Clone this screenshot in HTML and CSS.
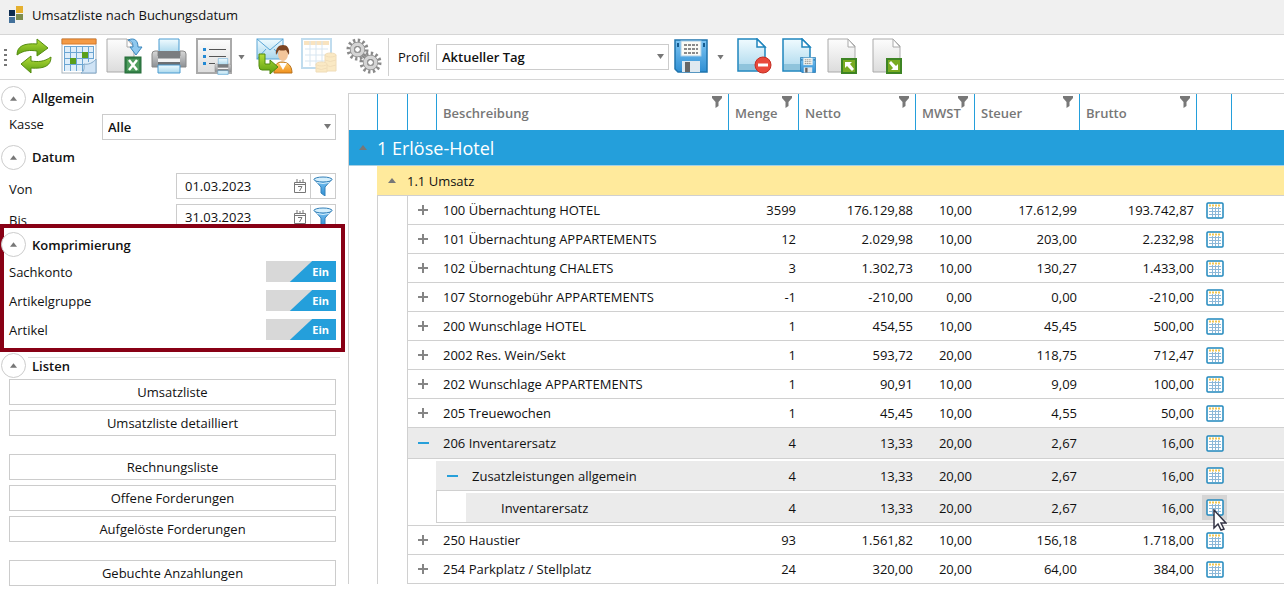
FILE: index.html
```html
<!DOCTYPE html>
<html lang="de">
<head>
<meta charset="utf-8">
<title>Umsatzliste nach Buchungsdatum</title>
<link rel="stylesheet" href="styles.css">
</head>
<body>
<svg class="defs" aria-hidden="true">
  <defs>
    <linearGradient id="gGreen" x1="0" y1="0" x2="0" y2="1"><stop offset="0" stop-color="#b5dd3a"/><stop offset="1" stop-color="#5a9e10"/></linearGradient>
    <linearGradient id="gPage" x1="0" y1="0" x2="0" y2="1"><stop offset="0" stop-color="#fdfdfd"/><stop offset="1" stop-color="#dcdcdc"/></linearGradient>
    <linearGradient id="gSky" x1="0" y1="0" x2="0" y2="1"><stop offset="0" stop-color="#f0fbff"/><stop offset="1" stop-color="#a9d7ec"/></linearGradient>
    <linearGradient id="gBlue" x1="0" y1="0" x2="0" y2="1"><stop offset="0" stop-color="#7cc4f3"/><stop offset="1" stop-color="#2f8fd3"/></linearGradient>
    <linearGradient id="gSteel" x1="0" y1="0" x2="0" y2="1"><stop offset="0" stop-color="#d8d8d8"/><stop offset="1" stop-color="#8d9094"/></linearGradient>
    <linearGradient id="gOrange" x1="0" y1="0" x2="0" y2="1"><stop offset="0" stop-color="#ffd070"/><stop offset="1" stop-color="#f08f1a"/></linearGradient>
    <symbol id="i-grid" viewBox="0 0 18 17">
      <rect x="1" y="1" width="16" height="15" rx="1" fill="#fff" stroke="#2188bd" stroke-width="1.500"/>
      <path d="M3 3.500h12" stroke="#f3c64f" stroke-width="2" stroke-dasharray="2 1"/>
      <path d="M3 6.500h12M3 9.500h12M3 12.500h12M6.500 5v10M9.500 5v10M12.500 5v10" stroke="#8db8d8" fill="none"/>
    </symbol>
    <symbol id="i-funnel" viewBox="0 0 10 12"><path d="M0 0h10v2L6.500 6v4L3.500 12V6L0 2z" fill="#787878"/></symbol>
    <symbol id="i-plus" viewBox="0 0 12 12"><path d="M6 1v10M1 6h10" stroke="#858585" stroke-width="2"/></symbol>
    <symbol id="i-minus" viewBox="0 0 12 12"><path d="M1 6h11" stroke="#27a0da" stroke-width="2"/></symbol>
    <symbol id="i-up" viewBox="0 0 8 5"><path d="M4 0l4 5H0z" fill="#777"/></symbol>
    <symbol id="i-datefilter" viewBox="0 0 20 20">
      <path d="M1 3l7 8v6l4 3v-9l7-8z" fill="url(#gBlue)" stroke="#3480b8"/>
      <ellipse cx="10" cy="3.500" rx="9" ry="2.500" fill="#d5effc" stroke="#3480b8"/><path d="M4 6.500q6 2 12 0" stroke="#d5effc" fill="none"/>
    </symbol>
    <symbol id="i-day" viewBox="0 0 12 14">
      <path d="M.5 3.500h11v10H.5zM.5 5.500h11" fill="none" stroke="#777"/><path d="M3 0v4M6 1v3M9 0v4" stroke="#777"/>
      <path d="M4 7.500h4L5.500 12" fill="none" stroke="#777"/>
    </symbol>
    <symbol id="i-disk" viewBox="0 0 34 34">
      <path d="M1 1h32v32H4l-3-3z" fill="url(#gBlue)" stroke="#1f74ad" stroke-width="1.500"/>
      <rect x="7" y="2" width="20" height="15" fill="#fbfbf5" stroke="#a9cfe8"/>
      <path d="M10 6h14M10 10h14M10 14h14" stroke="#666" stroke-width="1.500" stroke-dasharray="3 1"/>
      <rect x="8" y="22" width="18" height="11" fill="#dfe9f0"/><rect x="11" y="23" width="5" height="10" fill="#666"/>
      <path d="M3 4h2v4H3zM29 4h2v4h-2z" fill="#155c90"/>
    </symbol>
    <symbol id="i-printer" viewBox="0 0 36 36">
      <path d="M8 1h20v14H8z" fill="url(#gSky)" stroke="#4b9bd0"/>
      <path d="M1 16q0-3 3-3h3v5h22v-5h3q3 0 3 3v13H1z" fill="url(#gSteel)" stroke="#888"/>
      <path d="M7 13h22v7H7z" fill="#7a7d80"/><path d="M7 21h22v3H7z" fill="#f3f3f3"/><path d="M7 24h22v3H7z" fill="#6d7073"/>
      <path d="M7 27h22v8H7z" fill="url(#gSky)" stroke="#4b9bd0"/>
    </symbol>
    <symbol id="i-sheet" viewBox="0 0 36 36"><path d="M1 1h20l7 7v26H1z" fill="url(#gPage)" stroke="#aaa"/><path d="M21 1v8h7z" fill="#fff" stroke="#aaa"/></symbol>
    <symbol id="i-bluesheet" viewBox="0 0 36 36"><path d="M2 1h19l8 8v24H2z" fill="url(#gSky)" stroke="#1f85bd" stroke-width="1.500"/><path d="M3 26h25v6H3z" fill="#8fc4dc"/><path d="M21 1v8h8z" fill="#fff" stroke="#1f85bd" stroke-width="1.500"/></symbol>
    <symbol id="i-gear" viewBox="0 0 24 24">
      <circle cx="12" cy="12" r="9.500" fill="none" stroke="#8a8a8a" stroke-width="4" stroke-dasharray="2.400 2.574"/>
      <circle cx="12" cy="12" r="5.500" fill="none" stroke="#8a8a8a" stroke-width="5"/>
      <circle cx="12" cy="12" r="5.500" fill="none" stroke="#d4d4d4" stroke-width="3.500"/>
      <circle cx="12" cy="12" r="3" fill="#fff" stroke="#777"/>
    </symbol>
  </defs>
</svg>

<header class="titlebar">
  <svg class="logo" viewBox="0 0 14 18" width="16" height="18" aria-hidden="true"><path d="M0 4h6v6H0z" fill="#0d2c50"/><path d="M7 0h7v7H7z" fill="#e5b02f"/><path d="M0 11h6v6H0z" fill="#42709a"/><path d="M7 8h7v6H7z" fill="#7c8c4c"/></svg>
  <h1 class="title">Umsatzliste nach Buchungsdatum</h1>
</header>

<nav class="toolbar" aria-label="Werkzeuge">
  <span class="grip"></span>
  <button class="tool" type="button" aria-label="Aktualisieren"><svg viewBox="0 0 36 36">
    <path d="M1 17C1 8 8 5 21 6V1l11 9-11 8v-5C14 12 8 12 1 17z" fill="url(#gGreen)" stroke="#548c10"/>
    <path d="M35 19c0 9-7 12-20 11v5L5 26l10-8v5c7 1 13 1 20-4z" fill="url(#gGreen)" stroke="#548c10"/></svg></button>
  <button class="tool" type="button" aria-label="Kalender"><svg viewBox="0 0 36 36">
    <rect x="1" y="1" width="34" height="34" fill="#fff" stroke="#a9b4bc"/><path d="M1 1h34v5H1z" fill="#f39a45" stroke="#d87a28"/>
    <rect x="3" y="8" width="30" height="25" fill="#dfeefa"/>
    <path d="M3 8.500h30M3 14.500h30M3 20.500h30M3 26.500h22M3.500 8v25M9.500 8v25M15.500 8v25M21.500 8v25M27.500 8v16M32.500 8v13" stroke="#6ba5d2" fill="none"/>
    <path d="M21 14h6v6h-6zM9 20h6v6H9z" fill="#5a9f1b"/><path d="M20 35c4-2 3-7 3-9 4 1 9-1 12-5v14z" fill="#cfe3f5" stroke="#82a9c9"/></svg></button>
  <button class="tool" type="button" aria-label="Excel-Export"><svg viewBox="0 0 36 36"><use href="#i-sheet" width="36" height="36"/>
    <path d="M22 2c7-3 10 1 10 7h4l-6 8-6-8h3c0-4-1-6-5-7z" fill="#8fc8ee" stroke="#3a86bd"/>
    <rect x="19" y="19" width="16" height="16" fill="#348148" stroke="#246b38"/><rect x="21" y="21" width="12" height="12" fill="#4f9d5e"/><path d="M23 22l8 10M31 22l-8 10" stroke="#fff" stroke-width="2.500"/></svg></button>
  <button class="tool" type="button" aria-label="Drucken"><svg viewBox="0 0 36 36"><use href="#i-printer" width="36" height="36"/></svg></button>
  <button class="tool" type="button" aria-label="Liste drucken"><svg viewBox="0 0 36 36">
    <rect x="1" y="1" width="34" height="34" fill="url(#gPage)" stroke="#aaa" stroke-width="2"/>
    <path d="M7 10h3v3H7zM7 17h3v3H7zM7 24h3v3H7z" fill="#2389d3"/><path d="M13 11.500h17M13 18.500h17M13 25.500h6" stroke="#555"/>
    <use href="#i-printer" x="18" y="20" width="18" height="17"/></svg></button>
  <button class="drop" type="button" aria-label="Weitere Druckoptionen"></button>
  <button class="tool" type="button" aria-label="E-Mail senden"><svg viewBox="0 0 36 36">
    <rect x="1" y="1" width="26" height="20" fill="url(#gSky)" stroke="#5aa6d6"/><path d="M1 1l13 11L27 1M1 21l9-10M27 21l-9-10" fill="none" stroke="#5aa6d6"/>
    <path d="M18 35c0-8 3-11 8-11s10 3 10 11z" fill="url(#gOrange)" stroke="#b8711c"/><path d="M23 25l4 7 4-7z" fill="#fff"/>
    <ellipse cx="27" cy="16" rx="5" ry="7" fill="#f3c59a"/><path d="M20 17c-1-7 3-10 7-10s7 3 6 10l-3-5q-4 1-7 0z" fill="#7b4422"/>
    <path d="M3 16h6v10h5v-4l8 7-8 7v-4H6q-3 0-3-4z" fill="url(#gGreen)" stroke="#4f8a0f"/></svg></button>
  <button class="tool is-off" type="button" aria-label="Tabelle" disabled><svg viewBox="0 0 36 36">
    <rect x="1" y="1" width="29" height="29" fill="#fff" stroke="#4d9dd0" stroke-width="2"/><path d="M3 5h25" stroke="#eeb24a" stroke-width="4"/><path d="M4 11h23M4 17h23M4 23h23M9 3v25M15 3v25M21 3v25" stroke="#8fb8d8"/>
    <g fill="#f3c35a" stroke="#d79e36"><path d="M24 17h11v16H24z"/><ellipse cx="29.500" cy="17" rx="5.500" ry="2"/><path d="M24 22q5 3 11 0M24 27q5 3 11 0"/><path d="M15 26h11v8H15z"/><ellipse cx="20.500" cy="26" rx="5.500" ry="2"/><path d="M15 30q5 3 11 0"/></g></svg></button>
  <button class="tool" type="button" aria-label="Einstellungen"><svg viewBox="0 0 36 36"><use href="#i-gear" width="23" height="23"/><use href="#i-gear" x="13" y="13" width="23" height="23"/></svg></button>
  <span class="divider"></span>
  <label class="profil-label" for="profil">Profil</label>
  <span class="select-wrap profil"><select id="profil" class="select"><option>Aktueller Tag</option></select></span>
  <button class="tool" type="button" aria-label="Profil speichern"><svg viewBox="0 0 36 36"><use href="#i-disk" y="1" width="34" height="34"/></svg></button>
  <button class="drop drop-wide" type="button" aria-label="Weitere Speicheroptionen"></button>
  <button class="tool" type="button" aria-label="Profil löschen"><svg viewBox="0 0 36 36"><use href="#i-bluesheet" width="36" height="36"/><circle cx="27" cy="27" r="8" fill="#e9493b" stroke="#c32f24"/><path d="M22 27h10" stroke="#fff" stroke-width="3"/></svg></button>
  <button class="tool" type="button" aria-label="Profil speichern unter"><svg viewBox="0 0 36 36"><use href="#i-bluesheet" width="36" height="36"/><use href="#i-disk" x="19" y="19" width="16" height="16"/></svg></button>
  <button class="tool" type="button" aria-label="Profil importieren"><svg viewBox="0 0 36 36"><use href="#i-sheet" x="1" width="36" height="36"/><rect x="16" y="21" width="14" height="14" fill="#78ab22" stroke="#3d8424" stroke-width="2"/><path d="M19 24h7l-2 2 4 5-2 2-5-5-2 2z" fill="#fff"/></svg></button>
  <button class="tool" type="button" aria-label="Profil exportieren"><svg viewBox="0 0 36 36"><use href="#i-sheet" x="1" width="36" height="36"/><rect x="16" y="21" width="14" height="14" fill="#78ab22" stroke="#3d8424" stroke-width="2"/><path d="M27 32h-7l2-2-4-5 2-2 5 5 2-2z" fill="#fff"/></svg></button>
</nav>

<div class="body">
  <aside class="sidebar">
    <section class="group">
      <h2 class="group-head"><button class="fold" type="button" aria-label="Allgemein einklappen"><svg width="7" height="5"><use href="#i-up"/></svg></button>Allgemein</h2>
      <div class="field"><label for="kasse">Kasse</label><span class="select-wrap kasse"><select id="kasse" class="select"><option>Alle</option></select></span></div>
    </section>
    <section class="group">
      <h2 class="group-head"><button class="fold" type="button" aria-label="Datum einklappen"><svg width="7" height="5"><use href="#i-up"/></svg></button>Datum</h2>
      <div class="field date-field"><label for="von">Von</label><span class="date"><input id="von" type="text" value="01.03.2023"><button class="day" type="button" aria-label="Kalender Von"><svg width="12" height="14"><use href="#i-day"/></svg></button><button class="date-filter" type="button" aria-label="Filter Von"><svg width="20" height="20"><use href="#i-datefilter"/></svg></button></span></div>
      <div class="field date-field"><label for="bis">Bis</label><span class="date"><input id="bis" type="text" value="31.03.2023"><button class="day" type="button" aria-label="Kalender Bis"><svg width="12" height="14"><use href="#i-day"/></svg></button><button class="date-filter" type="button" aria-label="Filter Bis"><svg width="20" height="20"><use href="#i-datefilter"/></svg></button></span></div>
    </section>
    <section class="group marked">
      <h2 class="group-head"><button class="fold" type="button" aria-label="Komprimierung einklappen"><svg width="7" height="5"><use href="#i-up"/></svg></button>Komprimierung</h2>
      <label class="switch-row">Sachkonto<span class="switch"><input type="checkbox" checked><span class="on">Ein</span></span></label>
      <label class="switch-row">Artikelgruppe<span class="switch"><input type="checkbox" checked><span class="on">Ein</span></span></label>
      <label class="switch-row">Artikel<span class="switch"><input type="checkbox" checked><span class="on">Ein</span></span></label>
    </section>
    <section class="group lists">
      <h2 class="group-head"><button class="fold" type="button" aria-label="Listen einklappen"><svg width="7" height="5"><use href="#i-up"/></svg></button>Listen</h2>
      <div class="list-set"><button class="list-btn" type="button">Umsatzliste</button><button class="list-btn" type="button">Umsatzliste detailliert</button></div>
      <div class="list-set"><button class="list-btn" type="button">Rechnungsliste</button><button class="list-btn" type="button">Offene Forderungen</button><button class="list-btn" type="button">Aufgelöste Forderungen</button></div>
      <div class="list-set"><button class="list-btn" type="button">Gebuchte Anzahlungen</button></div>
    </section>
  </aside>

  <main class="content">
    <table class="grid">
      <colgroup><col class="c-lvl1"><col class="c-lvl2"><col class="c-lvl3"><col class="c-lvl4"><col class="c-text"><col class="c-menge"><col class="c-wide"><col class="c-mwst"><col class="c-steuer"><col class="c-wide"><col class="c-act"><col></colgroup>
      <thead>
        <tr><th></th><th></th><th></th>
          <th colspan="2">Beschreibung<svg class="funnel"><use href="#i-funnel"/></svg></th>
          <th>Menge<svg class="funnel"><use href="#i-funnel"/></svg></th>
          <th>Netto<svg class="funnel"><use href="#i-funnel"/></svg></th>
          <th>MWST<svg class="funnel"><use href="#i-funnel"/></svg></th>
          <th>Steuer<svg class="funnel"><use href="#i-funnel"/></svg></th>
          <th>Brutto<svg class="funnel"><use href="#i-funnel"/></svg></th>
          <th></th><th></th></tr>
      </thead>
      <tbody>
        <tr class="level-1"><td class="mark"><svg width="8" height="5"><use href="#i-up"/></svg></td><td colspan="11">1 Erlöse-Hotel</td></tr>
        <tr class="level-2"><td class="blank"></td><td class="mark"><svg width="8" height="5"><use href="#i-up"/></svg></td><td colspan="10">1.1 Umsatz</td></tr>
        <tr class="row"><td class="blank"></td><td class="blank edge"></td><td class="mark edge"><svg width="12" height="12"><use href="#i-plus"/></svg></td><td colspan="2" class="name">100 Übernachtung HOTEL</td><td>3599</td><td>176.129,88</td><td>10,00</td><td>17.612,99</td><td>193.742,87</td><td class="act"><button class="open" type="button" aria-label="Details"><svg width="18" height="17"><use href="#i-grid"/></svg></button></td><td></td></tr>
        <tr class="row"><td class="blank"></td><td class="blank edge"></td><td class="mark edge"><svg width="12" height="12"><use href="#i-plus"/></svg></td><td colspan="2" class="name">101 Übernachtung APPARTEMENTS</td><td>12</td><td>2.029,98</td><td>10,00</td><td>203,00</td><td>2.232,98</td><td class="act"><button class="open" type="button" aria-label="Details"><svg width="18" height="17"><use href="#i-grid"/></svg></button></td><td></td></tr>
        <tr class="row"><td class="blank"></td><td class="blank edge"></td><td class="mark edge"><svg width="12" height="12"><use href="#i-plus"/></svg></td><td colspan="2" class="name">102 Übernachtung CHALETS</td><td>3</td><td>1.302,73</td><td>10,00</td><td>130,27</td><td>1.433,00</td><td class="act"><button class="open" type="button" aria-label="Details"><svg width="18" height="17"><use href="#i-grid"/></svg></button></td><td></td></tr>
        <tr class="row"><td class="blank"></td><td class="blank edge"></td><td class="mark edge"><svg width="12" height="12"><use href="#i-plus"/></svg></td><td colspan="2" class="name">107 Stornogebühr APPARTEMENTS</td><td>-1</td><td>-210,00</td><td>0,00</td><td>0,00</td><td>-210,00</td><td class="act"><button class="open" type="button" aria-label="Details"><svg width="18" height="17"><use href="#i-grid"/></svg></button></td><td></td></tr>
        <tr class="row"><td class="blank"></td><td class="blank edge"></td><td class="mark edge"><svg width="12" height="12"><use href="#i-plus"/></svg></td><td colspan="2" class="name">200 Wunschlage HOTEL</td><td>1</td><td>454,55</td><td>10,00</td><td>45,45</td><td>500,00</td><td class="act"><button class="open" type="button" aria-label="Details"><svg width="18" height="17"><use href="#i-grid"/></svg></button></td><td></td></tr>
        <tr class="row"><td class="blank"></td><td class="blank edge"></td><td class="mark edge"><svg width="12" height="12"><use href="#i-plus"/></svg></td><td colspan="2" class="name">2002 Res. Wein/Sekt</td><td>1</td><td>593,72</td><td>20,00</td><td>118,75</td><td>712,47</td><td class="act"><button class="open" type="button" aria-label="Details"><svg width="18" height="17"><use href="#i-grid"/></svg></button></td><td></td></tr>
        <tr class="row"><td class="blank"></td><td class="blank edge"></td><td class="mark edge"><svg width="12" height="12"><use href="#i-plus"/></svg></td><td colspan="2" class="name">202 Wunschlage APPARTEMENTS</td><td>1</td><td>90,91</td><td>10,00</td><td>9,09</td><td>100,00</td><td class="act"><button class="open" type="button" aria-label="Details"><svg width="18" height="17"><use href="#i-grid"/></svg></button></td><td></td></tr>
        <tr class="row"><td class="blank"></td><td class="blank edge"></td><td class="mark edge"><svg width="12" height="12"><use href="#i-plus"/></svg></td><td colspan="2" class="name">205 Treuewochen</td><td>1</td><td>45,45</td><td>10,00</td><td>4,55</td><td>50,00</td><td class="act"><button class="open" type="button" aria-label="Details"><svg width="18" height="17"><use href="#i-grid"/></svg></button></td><td></td></tr>
        <tr class="row open-row"><td class="blank"></td><td class="blank edge"></td><td class="mark edge"><svg width="12" height="12"><use href="#i-minus"/></svg></td><td colspan="2" class="name">206 Inventarersatz</td><td>4</td><td>13,33</td><td>20,00</td><td>2,67</td><td>16,00</td><td class="act"><button class="open" type="button" aria-label="Details"><svg width="18" height="17"><use href="#i-grid"/></svg></button></td><td></td></tr>
        <tr class="row open-row nested"><td class="blank"></td><td class="blank edge"></td><td class="blank edge"></td><td class="mark"><svg width="12" height="12"><use href="#i-minus"/></svg></td><td class="name">Zusatzleistungen allgemein</td><td>4</td><td>13,33</td><td>20,00</td><td>2,67</td><td>16,00</td><td class="act"><button class="open" type="button" aria-label="Details"><svg width="18" height="17"><use href="#i-grid"/></svg></button></td><td></td></tr>
        <tr class="row open-row nested"><td class="blank"></td><td class="blank edge"></td><td class="blank edge"></td><td class="blank edge ruled"></td><td class="name leaf">Inventarersatz</td><td>4</td><td>13,33</td><td>20,00</td><td>2,67</td><td>16,00</td><td class="act"><button class="open is-hover" type="button" aria-label="Details"><svg width="18" height="17"><use href="#i-grid"/></svg><svg class="cursor" viewBox="0 0 14 22" width="14" height="22"><path d="M1 1v18l4-4 3 6 3-1-3-6h5z" fill="#fff" stroke="#334" stroke-width="1.500"/></svg></button></td><td></td></tr>
        <tr class="close-row"><td class="blank"></td><td class="blank edge"></td><td class="edge" colspan="10"></td></tr>
        <tr class="row"><td class="blank"></td><td class="blank edge"></td><td class="mark edge"><svg width="12" height="12"><use href="#i-plus"/></svg></td><td colspan="2" class="name">250 Haustier</td><td>93</td><td>1.561,82</td><td>10,00</td><td>156,18</td><td>1.718,00</td><td class="act"><button class="open" type="button" aria-label="Details"><svg width="18" height="17"><use href="#i-grid"/></svg></button></td><td></td></tr>
        <tr class="row"><td class="blank"></td><td class="blank edge"></td><td class="mark edge"><svg width="12" height="12"><use href="#i-plus"/></svg></td><td colspan="2" class="name">254 Parkplatz / Stellplatz</td><td>24</td><td>320,00</td><td>20,00</td><td>64,00</td><td>384,00</td><td class="act"><button class="open" type="button" aria-label="Details"><svg width="18" height="17"><use href="#i-grid"/></svg></button></td><td></td></tr>
      </tbody>
    </table>
  </main>
</div>
</body>
</html>
```

FILE: styles.css
```css
* { box-sizing: border-box; }
body { margin: 0; background: #fff; color: #111; font: 13px/20px "Open Sans", "Noto Sans", sans-serif; }
button, input, select { font: inherit; color: inherit; margin: 0; }
button { padding: 0; border: 0; background: none; }
svg { display: block; }
.defs { position: absolute; width: 0; height: 0; }

.titlebar { display: flex; align-items: center; gap: 8px; height: 34px; padding: 0 8px 4px; background: #f0f0f0; }
.title { margin: 0; font-size: 13px; font-weight: 400; }

.toolbar { display: flex; align-items: center; height: 46px; padding-left: 4px; border-top: 1px solid #d6d6d6; border-bottom: 1px solid #d6d6d6; }
.grip { width: 3px; height: 17px; margin-right: 9px; background: repeating-linear-gradient(#777 0 2px, transparent 2px 5px); }
.tool { flex: none; width: 36px; height: 40px; margin-right: 9px; padding-bottom: 2px; }
.tool svg { width: 36px; height: 36px; overflow: visible; }
.tool.is-off { opacity: .35; }
.drop { width: 16px; height: 20px; margin: 0 2px 0 -3px; }
.drop::before, .select-wrap::after { content: ""; display: block; width: 7px; height: 5px; background: #777; clip-path: polygon(0 0, 100% 0, 50% 100%); }
.drop-wide { margin: 0 3px 0 -2px; }
.divider { width: 1px; height: 38px; margin-right: 9px; margin-left: -3px; background: #d0d0d0; }
.profil-label { width: 38px; }
.select-wrap { position: relative; display: block; }
.select-wrap::after { position: absolute; right: 5px; top: 10px; pointer-events: none; }
.select { width: 100%; height: 26px; padding: 0 20px 0 5px; border: 1px solid #ccc; border-radius: 0; background: #fff; appearance: none; font-weight: 600; }
.profil { width: 233px; margin-right: 5px; }

.body { display: flex; align-items: flex-start; }
.sidebar { flex: none; width: 348px; padding-top: 4px; }
.group-head { display: flex; align-items: center; gap: 6px; height: 28px; margin: 0; padding-left: 1px; font-size: 13px; font-weight: 600; }
.fold { flex: none; display: grid; place-items: center; width: 25px; height: 25px; border: 1px solid #ccc; border-radius: 50%; background: #fff; }
.field { display: flex; justify-content: space-between; padding: 2px 12px 3px 9px; }
.kasse { width: 234px; }
.date-field { align-items: flex-end; padding: 2px 12px 3px 9px; }
.date { display: flex; width: 160px; height: 26px; border: 1px solid #ccc; }
.date input { flex: 1; min-width: 0; padding: 0 0 0 8px; border: 0; background: none; }
.day { display: grid; place-items: center; width: 20px; }
.date-filter { display: grid; place-items: center; width: 25px; border-left: 1px solid #ccc; }
.marked { position: relative; margin: -9px 3px 0 0; border: 4px solid #880015; background: #fff; }
.marked .group-head { height: 33px; padding-left: 0; margin-left: -3px; }
.switch-row { display: flex; justify-content: space-between; align-items: center; height: 29px; padding: 0 5px 8px; }
.switch { position: relative; width: 70px; height: 21px; background: #d8d8d8; }
.switch input { position: absolute; inset: 0; width: 100%; height: 100%; margin: 0; opacity: 0; }
.switch .on { display: block; height: 21px; padding-right: 7px; background: #249fdb; clip-path: polygon(34% 100%, 66% 0, 100% 0, 100% 100%); color: #fff; font-size: 11px; font-weight: 700; text-align: right; line-height: 21px; }
.lists { background: linear-gradient(#ddd, #ddd) 28px 5px / calc(100% - 36px) 1px no-repeat; }
.lists .group-head { height: 27px; }
.list-set { display: flex; flex-direction: column; gap: 5px; padding: 0 12px 18px 9px; }
.list-btn { height: 26px; border: 1px solid #ccc; background: #fff; }

.content { flex: 1; min-width: 0; margin-top: 13px; border: 1px solid #d0d0d0; border-width: 1px 0 0 1px; overflow: hidden; }
.grid { width: 100%; table-layout: fixed; border-collapse: separate; border-spacing: 0; }
.c-lvl1 { width: 28px; } .c-lvl2 { width: 30px; } .c-lvl3 { width: 29px; } .c-lvl4 { width: 30px; }
.c-text { width: 262px; } .c-menge { width: 70px; } .c-wide { width: 117px; } .c-mwst { width: 59px; }
.c-steuer { width: 105px; } .c-act { width: 35px; }
.grid th { position: relative; height: 36px; padding: 2px 0 0 6px; border-left: 1px solid #249fdb; color: #777; font-weight: 600; text-align: left; }
.grid th:first-child { border-left: 0; }
.funnel { position: absolute; top: 2px; right: 6px; width: 10px; height: 12px; }
.grid td { padding: 0; }
.mark svg { margin: 0 auto; }
.level-1 td { height: 36px; border-bottom: 1px solid #a5cfe4; background: #249fdb; color: #fff; font-size: 18px; }
.level-2 td { height: 30px; border-bottom: 1px solid #d0d0d0; background: #ffea9c; }
.row td { height: 29px; padding-right: 2px; border-bottom: 1px solid #d0d0d0; text-align: right; }
.grid .blank { border-bottom: 0; background: #fff; }
.grid .edge { border-left: 1px solid #d0d0d0; }
.row .mark { padding-left: 3px; }
.row .name { padding-left: 7px; text-align: left; }
.open-row td { height: 31px; background: #ebebeb; }
.nested td { height: 32px; border-top: 2px solid #fff; }
.nested .blank { border-top: 0; }
.nested .name { padding-left: 6px; }
.nested .leaf { padding-left: 35px; }
.grid .ruled { border-bottom: 1px solid #d0d0d0; }
.close-row td { height: 3px; border-bottom: 1px solid #d0d0d0; }
.row .act { padding-left: 6px; }
.open { position: relative; display: grid; place-items: center; width: 25px; height: 25px; }
.open.is-hover { background: #d5d5d5; }
.cursor { position: absolute; left: 11px; top: 14px; }
```
